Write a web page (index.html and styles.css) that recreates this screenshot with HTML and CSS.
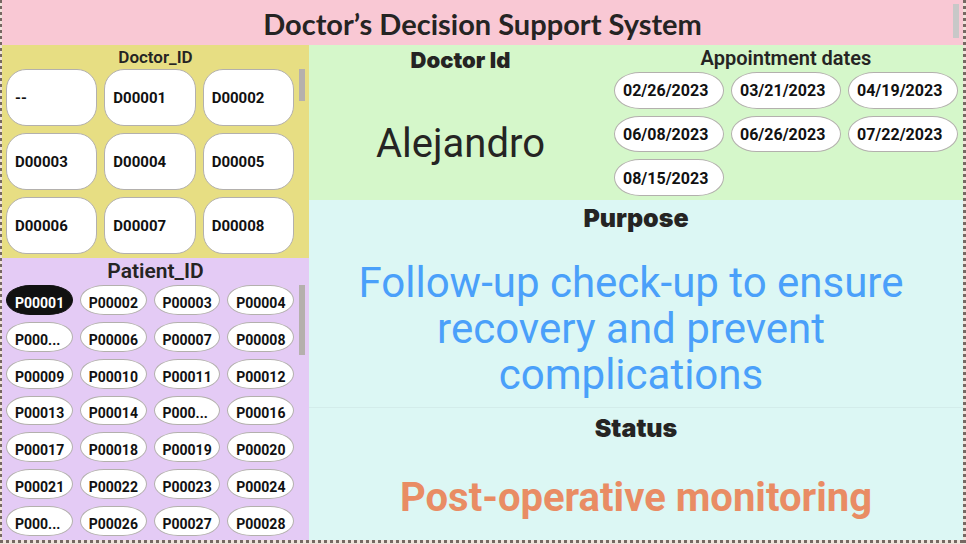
FILE: index.html
```html
<!DOCTYPE html>
<html lang="en">
<head>
<meta charset="utf-8">
<title>Doctor’s Decision Support System</title>
<link rel="stylesheet" href="styles.css">
</head>
<body>
<div class="canvas">
  <header class="banner">
    <h1>Doctor’s Decision Support System</h1>
    <span class="scroll scroll-banner"></span>
  </header>
  <div class="board">
    <div class="side">
      <section class="panel doctors">
        <h2 class="label label-small">Doctor_ID</h2>
        <div class="slicer">
          <div class="tiles tiles-three">
            <button class="tile">--</button><button class="tile">D00001</button><button class="tile">D00002</button>
            <button class="tile">D00003</button><button class="tile">D00004</button><button class="tile">D00005</button>
            <button class="tile">D00006</button><button class="tile">D00007</button><button class="tile">D00008</button>
          </div>
          <span class="scroll"></span>
        </div>
      </section>
      <section class="panel patients">
        <h2 class="label">Patient_ID</h2>
        <div class="slicer">
          <div class="tiles tiles-four">
            <button class="tile selected" aria-pressed="true">P00001</button><button class="tile">P00002</button><button class="tile">P00003</button><button class="tile">P00004</button>
            <button class="tile">P000...</button><button class="tile">P00006</button><button class="tile">P00007</button><button class="tile">P00008</button>
            <button class="tile">P00009</button><button class="tile">P00010</button><button class="tile">P00011</button><button class="tile">P00012</button>
            <button class="tile">P00013</button><button class="tile">P00014</button><button class="tile">P000...</button><button class="tile">P00016</button>
            <button class="tile">P00017</button><button class="tile">P00018</button><button class="tile">P00019</button><button class="tile">P00020</button>
            <button class="tile">P00021</button><button class="tile">P00022</button><button class="tile">P00023</button><button class="tile">P00024</button>
            <button class="tile">P000...</button><button class="tile">P00026</button><button class="tile">P00027</button><button class="tile">P00028</button>
          </div>
          <span class="scroll"></span>
        </div>
      </section>
    </div>
    <main class="main">
      <div class="top">
        <section class="card doctor">
          <h2 class="heading heading-small">Doctor Id</h2>
          <p class="value">Alejandro</p>
        </section>
        <section class="dates">
          <h2 class="label">Appointment dates</h2>
          <div class="tiles tiles-three">
            <button class="tile">02/26/2023</button><button class="tile">03/21/2023</button><button class="tile">04/19/2023</button>
            <button class="tile">06/08/2023</button><button class="tile">06/26/2023</button><button class="tile">07/22/2023</button>
            <button class="tile">08/15/2023</button>
          </div>
        </section>
      </div>
      <section class="card purpose">
        <h2 class="heading">Purpose</h2>
        <p class="value">Follow-up check-up to ensure recovery and prevent complications</p>
      </section>
      <section class="card status">
        <h2 class="heading">Status</h2>
        <p class="value">Post-operative monitoring</p>
      </section>
    </main>
  </div>
</div>
</body>
</html>
```

FILE: styles.css
```css
* { box-sizing: border-box; }

body {
  margin: 0;
  color: #252423;
  font-family: Roboto, "Liberation Sans", sans-serif;
}

h1, h2, p { margin: 0; }

/* Page canvas with a dotted selection edge */
.canvas {
  display: flex;
  flex-direction: column;
  min-height: 100vh;
  padding: 0 3px 4px 2px;
  background:
    repeating-linear-gradient(to bottom, #766862 0 3px, #efe2da 3px 6px) left top / 2px 100% no-repeat,
    repeating-linear-gradient(to bottom, #766862 0 3px, #efe2da 3px 6px) right top / 3px 100% no-repeat,
    repeating-linear-gradient(to right, #766862 0 3px, #efe2da 3px 6px) left bottom 1px / 100% 3px no-repeat,
    #efe2da;
}

.banner {
  position: relative;
  height: 45px;
  padding-top: 6px;
  background: #f9c8d4;
  text-align: center;
}

.banner h1 {
  font: 700 29px/36px Lato, sans-serif;
}

.scroll {
  width: 6px;
  height: 32px;
  background: #b5b0ad;
}

.scroll-banner {
  position: absolute;
  top: 4px;
  right: 4px;
  height: 34px;
  background: #c8c8c8;
}

.board {
  display: grid;
  grid-template-columns: 307fr 654fr;
  flex: 1;
}

.side {
  display: grid;
  grid-template-rows: 213fr 282fr;
}

.panel {
  display: flex;
  flex-direction: column;
  padding: 0 4px 4px;
}

.doctors { background: #e7de83; }
.patients { background: #e4cbf5; }
.patients .scroll { height: 70px; }

.label {
  font-size: 20px;
  font-weight: 600;
  line-height: 27px;
  text-align: center;
}

.patients .label {
  font-size: 21px;
  line-height: 27px;
}

.label-small {
  font-size: 17px;
  line-height: 24px;
}

.slicer {
  display: flex;
  flex: 1;
  gap: 5px;
}

.tiles {
  display: grid;
  flex: 1;
  grid-auto-rows: 1fr;
  gap: 7px;
}

.tiles-three { grid-template-columns: repeat(3, 1fr); }
.tiles-four { grid-template-columns: repeat(4, 1fr); }

.tile {
  min-width: 0;
  padding: 0 8px;
  border: 1px solid #b3b0ad;
  border-radius: 20px;
  background: #fff;
  color: #111;
  font: 700 15px/18px Roboto, "Liberation Sans", sans-serif;
  text-align: left;
  white-space: nowrap;
}

.patients .tile {
  padding-top: 6px;
  border-radius: 24px / 50%;
  font-size: 14px;
  line-height: 16px;
}

.patients .selected {
  border-color: #111;
  background: #111;
  color: #fff;
}

.main {
  display: grid;
  grid-template-rows: 155fr 207fr 133fr;
  background: #dcf7f4;
}

.top {
  display: grid;
  grid-template-columns: 303fr 351fr;
  background: #d5f7ca;
}

.card {
  display: flex;
  flex-direction: column;
  text-align: center;
}

.heading {
  font: 900 25px/36px Inter, sans-serif;
}

.heading-small {
  font-size: 22px;
  line-height: 30px;
}

.value {
  display: flex;
  flex: 1;
  align-items: center;
  justify-content: center;
  font-size: 42px;
  line-height: 46px;
}

.doctor .value {
  padding-top: 12px;
  font-size: 40px;
}

.dates {
  display: flex;
  flex-direction: column;
  padding: 0 5px 4px 2px;
}

.dates .tile {
  padding-top: 2px;
  border-radius: 26px / 50%;
  font-size: 16px;
}

.purpose .value {
  padding: 14px 40px 0 30px;
  color: #4aa0fa;
}

.status {
  padding-top: 2px;
  border-top: 1px solid #d3ecea;
}

.status .value {
  padding-top: 10px;
  color: #e98c64;
  font-size: 40px;
  font-weight: 700;
}
```
